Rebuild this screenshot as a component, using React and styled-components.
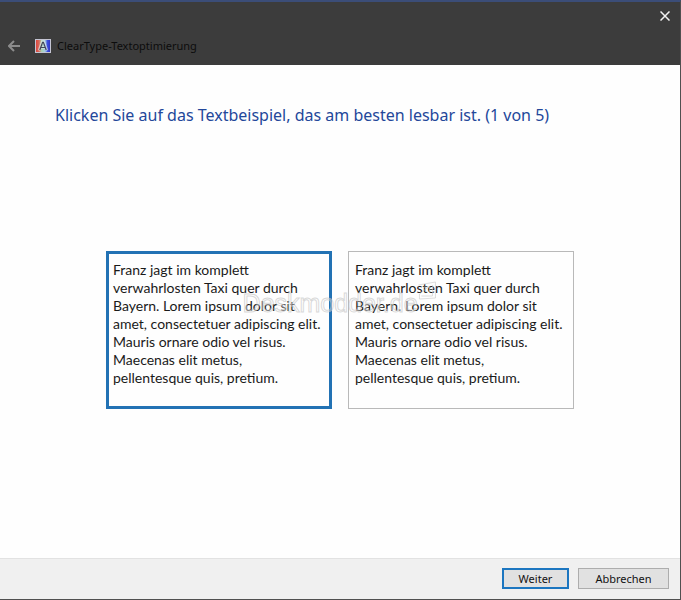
import { useState } from 'react';
import styled, { createGlobalStyle } from 'styled-components';

const SAMPLE_TEXT = `Franz jagt im komplett
verwahrlosten Taxi quer durch
Bayern. Lorem ipsum dolor sit
amet, consectetuer adipiscing elit.
Mauris ornare odio vel risus.
Maecenas elit metus,
pellentesque quis, pretium.`;

const GlobalStyle = createGlobalStyle`
  * {
    box-sizing: border-box;
  }

  body {
    margin: 0;
    font-family: 'Noto Sans', 'Open Sans', sans-serif;
    font-size: 11px;
    color: #111;
  }
`;

const Window = styled.div`
  min-height: 100vh;
  display: flex;
  flex-direction: column;
  background-color: #fefefe;
  border-top: 2px solid #3b4d78;
  border-right: 1px solid #505050;
  border-bottom: 1px solid #505050;
`;

const TitleBar = styled.header`
  display: flex;
  flex-direction: column;
  background-color: #3c3c3c;
`;

const IconButton = styled.button`
  display: flex;
  align-items: center;
  justify-content: center;
  padding: 0;
  border: none;
  background: none;
  color: ${(props) => props.$color};
`;

const CloseButton = styled(IconButton)`
  align-self: flex-end;
  width: 30px;
  height: 28px;
`;

const TitleRow = styled.div`
  display: flex;
  align-items: center;
  height: 35px;
  padding: 0 8px 4px;
`;

const AppIcon = styled.svg`
  margin: 0 6px 0 15px;
`;

const Title = styled.h1`
  margin: 0;
  font-size: 11px;
  line-height: 16px;
  font-weight: 400;
  color: #0c0c0c;
`;

const Content = styled.main`
  flex: 1;
  padding: 38px 55px 40px;
`;

const Heading = styled.h2`
  margin: 0;
  font-size: 16px;
  line-height: 24px;
  font-weight: 400;
  color: #23479a;
`;

const Samples = styled.div`
  position: relative;
  display: flex;
  justify-content: center;
  gap: 16px;
  margin-top: 124px;
`;

const Sample = styled.button`
  flex: 0 1 226px;
  min-height: 158px;
  display: flex;
  padding: ${(props) => (props.$selected ? '7px 0 7px 4px' : '9px 0 9px 6px')};
  border: ${(props) =>
    props.$selected ? '3px solid #2272b4' : '1px solid #b9b9b9'};
  background-color: #fefefe;
  font-family: Lato, 'Open Sans', sans-serif;
  font-size: 14px;
  line-height: 18px;
  text-align: left;
  white-space: pre-line;
  color: #1a1a1a;
`;

const Watermark = styled.div`
  position: absolute;
  top: 30px;
  left: 50%;
  transform: translateX(-50%);
  display: flex;
  align-items: flex-start;
  pointer-events: none;
  font-family: 'Liberation Sans', sans-serif;
  font-size: 25px;
  line-height: 44px;
  color: rgba(255, 255, 255, 0.35);
  -webkit-text-stroke: 1px rgba(190, 190, 190, 0.6);
`;

const Footer = styled.footer`
  display: flex;
  justify-content: flex-end;
  gap: 9px;
  padding: 9px 11px 10px;
  background-color: #f0f0f0;
  border-top: 1px solid #e2e2e2;
`;

const Button = styled.button`
  width: ${(props) => (props.$primary ? '67px' : '91px')};
  height: 21px;
  padding: 0;
  border: ${(props) =>
    props.$primary ? '2px solid #1c76c0' : '1px solid #adadad'};
  background-color: #e1e1e1;
  font-family: inherit;
  font-size: 11px;
  line-height: 16px;
  color: #111;
`;

function BackIcon() {
  return (
    <svg width="12" height="12" viewBox="0 0 12 12" fill="none">
      <path
        d="M6 1L1 6L6 11M1 6H12"
        stroke="currentColor"
        strokeWidth="2"
      />
    </svg>
  );
}

function CloseIcon() {
  return (
    <svg width="10" height="10" viewBox="0 0 10 10" fill="none">
      <path
        d="M0.5 0.5L9.5 9.5M9.5 0.5L0.5 9.5"
        stroke="currentColor"
        strokeWidth="1.5"
      />
    </svg>
  );
}

function ClearTypeIcon() {
  return (
    <AppIcon width="16" height="14" viewBox="0 0 16 14" aria-hidden="true">
      <defs>
        <linearGradient id="spectrum">
          <stop offset="0" stopColor="#d9463f" />
          <stop offset="0.22" stopColor="#d96a5c" />
          <stop offset="0.4" stopColor="#a8d4ae" />
          <stop offset="0.65" stopColor="#a4cbe4" />
          <stop offset="0.82" stopColor="#3b4fdc" />
          <stop offset="1" stopColor="#3038c4" />
        </linearGradient>
      </defs>
      <rect width="16" height="14" fill="#c4c4d2" />
      <rect x="1" y="1" width="14" height="12" fill="url(#spectrum)" />
      <path
        d="M4 11.5L7.2 2.5H8.8L12 11.5M5.5 8.5H10.5"
        fill="none"
        stroke="#e6eef0"
        strokeOpacity="0.6"
        strokeWidth="2.6"
      />
      <path
        d="M4.8 11L7.6 3.4H8.4L11.2 11M5.8 8.5H10.2"
        fill="none"
        stroke="#3f4658"
        strokeWidth="1.2"
      />
    </AppIcon>
  );
}

function WatermarkMark() {
  return (
    <svg width="20" height="20" viewBox="0 0 20 20" fill="none">
      <path
        d="M1 4L18 1V17L2 18V13L11 6M6 6H12V11M4 15H15V4"
        stroke="#c8c8c8"
        strokeOpacity="0.6"
        strokeWidth="1"
      />
    </svg>
  );
}

function App() {
  const [selected, setSelected] = useState(0);

  return (
    <>
      <GlobalStyle />
      <Window>
        <TitleBar>
          <CloseButton $color="#f2f2f2" aria-label="Schließen">
            <CloseIcon />
          </CloseButton>
          <TitleRow>
            <IconButton $color="#8c8c8c" aria-label="Zurück">
              <BackIcon />
            </IconButton>
            <ClearTypeIcon />
            <Title>ClearType-Textoptimierung</Title>
          </TitleRow>
        </TitleBar>
        <Content>
          <Heading>
            Klicken Sie auf das Textbeispiel, das am besten lesbar ist. (1 von
            5)
          </Heading>
          <Samples>
            {[0, 1].map((index) => (
              <Sample
                key={index}
                $selected={selected === index}
                aria-pressed={selected === index}
                onClick={() => setSelected(index)}
              >
                {SAMPLE_TEXT}
              </Sample>
            ))}
            <Watermark>
              Deskmodder.de
              <WatermarkMark />
            </Watermark>
          </Samples>
        </Content>
        <Footer>
          <Button $primary>Weiter</Button>
          <Button>Abbrechen</Button>
        </Footer>
      </Window>
    </>
  );
}

export default App;
